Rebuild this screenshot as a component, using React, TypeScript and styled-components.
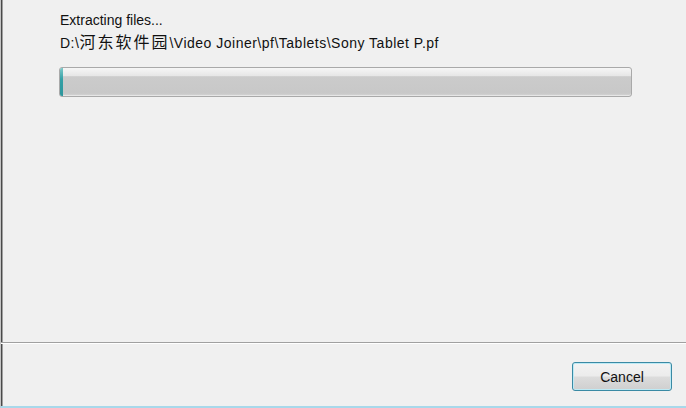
import React from "react";
import styled, { createGlobalStyle } from "styled-components";

const GlobalStyle = createGlobalStyle`
  html, body {
    margin: 0;
    padding: 0;
    background: #f0f0f0;
  }
  body {
    font-family: "Liberation Sans", "Noto Sans CJK SC", sans-serif;
  }
`;

const Window = styled.div`
  width: 686px;
  height: 408px;
  box-sizing: border-box;
  display: flex;
  flex-direction: column;
  background: #f0f0f0;
  border-left: 1px solid #c4c4c4;
  border-bottom: 2px solid #a8d8ea;
  box-shadow: inset 1px 0 0 #4a4a4a, inset 2px 0 0 #a0a0a0;
`;

const Body = styled.div`
  flex: 1;
  padding: 10px 0 0 58px;
`;

const StatusLine = styled.div<{ $spread?: number }>`
  font-size: 14px;
  line-height: 21px;
  color: #111;
  letter-spacing: ${(p) => p.$spread ?? 0}px;
  white-space: nowrap;
  padding-left: 1px;
`;

const Cjk = styled.span`
  font-family: "Noto Sans CJK SC", sans-serif;
  font-size: 16px;
  letter-spacing: 2px;
`;

const Track = styled.div`
  margin-top: 13px;
  width: 573px;
  height: 30px;
  box-sizing: border-box;
  border: 1px solid #a9a9a9;
  border-radius: 3px;
  overflow: hidden;
  background: linear-gradient(
    to bottom,
    #f6f6f6 0%,
    #e6e6e6 28%,
    #cbcbcb 31%,
    #c8c8c8 90%,
    #d6d6d6 100%
  );
  box-shadow: inset 0 -1px 0 #e6e6e6;
`;

const Fill = styled.div`
  height: 100%;
  background: linear-gradient(to bottom, #7cc8c8 0%, #34a0a6 40%, #2d969c 100%);
`;

const Footer = styled.div`
  height: 64px;
  box-sizing: border-box;
  border-top: 1px solid #a0a0a0;
  box-shadow: inset 0 1px 0 #ffffff;
  display: flex;
  justify-content: flex-end;
  align-items: flex-start;
  padding: 19px 14px 0 0;
`;

const Button = styled.button`
  width: 100px;
  height: 29px;
  box-sizing: border-box;
  border: 1px solid #3a8aa4;
  border-radius: 3px;
  box-shadow: inset 0 0 0 1px #bdeaf5;
  background: linear-gradient(
    to bottom,
    #f3f3f3 0%,
    #ececec 48%,
    #dcdcdc 52%,
    #cfcfcf 100%
  );
  font-family: "Liberation Sans", sans-serif;
  font-size: 14px;
  color: #111;
  padding: 0;
`;

export default function App() {
  const progress = 0.5;
  return (
    <>
      <GlobalStyle />
      <Window>
        <Body>
          <StatusLine>Extracting files...</StatusLine>
          <StatusLine $spread={0.5}>
            D:\<Cjk>河东软件园</Cjk>\Video Joiner\pf\Tablets\Sony Tablet P.pf
          </StatusLine>
          <Track>
            <Fill style={{ width: `${progress}%` }} />
          </Track>
        </Body>
        <Footer>
          <Button>Cancel</Button>
        </Footer>
      </Window>
    </>
  );
}
